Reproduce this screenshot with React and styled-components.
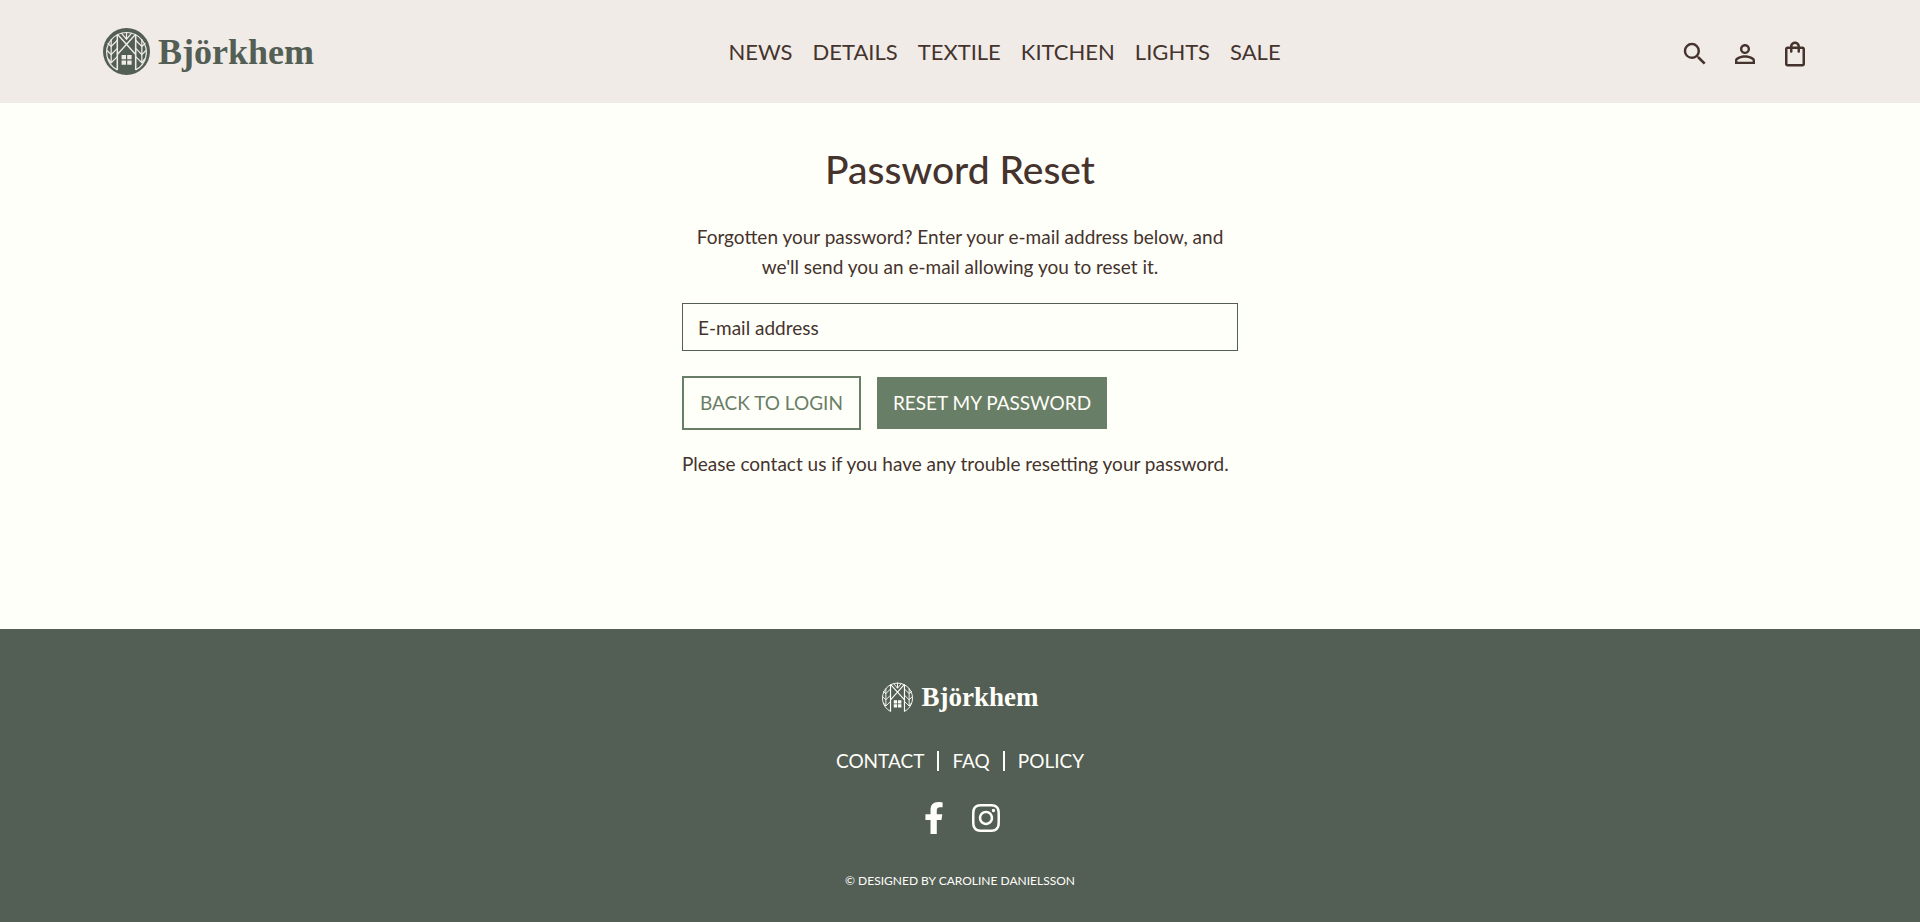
import React from "react";
import styled, { createGlobalStyle } from "styled-components";
import { FaFacebookF, FaInstagram } from "react-icons/fa";

const GlobalStyle = createGlobalStyle`
  *, *::before, *::after { box-sizing: border-box; }
  body {
    margin: 0;
    background: #fffffa;
    color: #45332d;
    font-family: Lato, "Liberation Sans", sans-serif;
    font-size: 19px;
    line-height: 30px;
  }
  a { color: inherit; text-decoration: none; }
`;

const Page = styled.div`
  display: flex;
  flex-direction: column;
  min-height: 100vh;
`;

const Header = styled.header`
  display: flex;
  align-items: center;
  justify-content: space-between;
  padding: 28px 100px;
  background: #f0ebe6;
`;

const Brand = styled.a`
  display: inline-flex;
  align-items: center;
  gap: ${(p) => (p.$small ? 9 : 8)}px;
  padding: 0 ${(p) => (p.$small ? 0 : 3)}px;
  color: ${(p) => (p.$small ? "#fffffa" : "#535e55")};
  svg {
    width: ${(p) => (p.$small ? 31 : 47)}px;
    height: ${(p) => (p.$small ? 31 : 47)}px;
  }
`;

const Wordmark = styled.span`
  font-family: "Liberation Serif", serif;
  font-weight: 700;
  font-size: ${(p) => (p.$small ? 27 : 36)}px;
  line-height: 32px;
`;

const Nav = styled.nav`
  display: flex;
  padding-left: 22px;
  font-size: 22px;
  a { padding: 0 10px; }
`;

const Tools = styled.div`
  display: flex;
  padding-top: 5px;
`;

const IconButton = styled.button`
  display: flex;
  padding: 0 10px;
  border: 0;
  background: none;
  color: inherit;
  cursor: pointer;
  svg { width: 30px; height: 30px; fill: currentColor; }
`;

const Main = styled.main`
  display: flex;
  flex: 1;
  flex-direction: column;
  align-items: center;
  padding: 36px 20px;
`;

const Panel = styled.section`
  width: 100%;
  max-width: 556px;
`;

const Title = styled.h1`
  margin: 0 0 23px;
  font-size: 39px;
  font-weight: 500;
  line-height: 60px;
  text-align: center;
`;

const Text = styled.p`
  margin: 0;
  text-align: ${(p) => (p.$center ? "center" : "left")};
`;

const Field = styled.input`
  display: block;
  width: 100%;
  height: 48px;
  margin: 21px 0 25px;
  padding: 0 15px;
  border: 1px solid #535e55;
  border-radius: 0;
  background: transparent;
  color: inherit;
  font: inherit;
  &::placeholder { color: inherit; opacity: 1; }
`;

const Actions = styled.div`
  display: flex;
  align-items: center;
  gap: 16px;
  margin-bottom: 19px;
`;

const Button = styled.button`
  height: ${(p) => (p.$solid ? 52 : 54)}px;
  padding: 0 16px;
  border: ${(p) => (p.$solid ? "0" : "2px solid #697e66")};
  background: ${(p) => (p.$solid ? "#697e66" : "transparent")};
  color: ${(p) => (p.$solid ? "#fffffa" : "#697e66")};
  font: inherit;
  cursor: pointer;
`;

const Footer = styled.footer`
  display: flex;
  flex-direction: column;
  align-items: center;
  padding: 52px 20px 26px;
  background: #535e55;
  color: #fffffa;
`;

const FooterLinks = styled.nav`
  display: flex;
  align-items: center;
  margin: 33px 0 26px;
  a { padding: 0 13px; }
`;

const Divider = styled.span`
  width: 2px;
  height: 20px;
  background: #fffffa;
`;

const Social = styled.div`
  display: flex;
  gap: 20px;
  margin-bottom: 32px;
  a { display: flex; }
`;

const Credit = styled.small`
  font-size: 12px;
`;

function Emblem({ small }) {
  const line = small ? "currentColor" : "#f0ebe6";
  return (
    <svg viewBox={small ? "3 3 40 40" : "0 0 46 46"} aria-hidden="true">
      {!small && <circle cx="23" cy="23" r="23" fill="currentColor" />}
      <g fill="none" stroke={line} strokeWidth="1.2">
        <path d="M14 41A19.4 19.4 0 1 1 32 41" />
        <path d="M14 41V6.5M32 41V6.5" strokeWidth="1.5" />
        <path d="M8 11V34M38 11V34" />
        <path d="M23 4V11M18 5L23 11L28 5" />
        <path d="M14 6L23 16L32 6M14 26L23 16L32 26" strokeWidth="1.4" />
        <path d="M14 12L8 18L4.5 15M14 20L8 26L4 22M14 28L8 34L5 30" />
        <path d="M32 12L38 18L41.5 15M32 20L38 26L42 22M32 28L38 34L41 30" />
      </g>
      <path
        fill={line}
        d="M18.2 26.4h4.3v4.3h-4.3zM23.7 26.4H28v4.3h-4.3zM18.2 31.7h4.3V36h-4.3zM23.7 31.7H28V36h-4.3z"
      />
    </svg>
  );
}

const tools = [
  ["Search", "M15.5 14h-.79l-.28-.27A6.47 6.47 0 0 0 16 9.5 6.5 6.5 0 1 0 9.5 16c1.61 0 3.09-.59 4.23-1.57l.27.28v.79l5 4.99L20.49 19l-4.99-5zm-6 0C7.01 14 5 11.99 5 9.5S7.01 5 9.5 5 14 7.01 14 9.5 11.99 14 9.5 14z"],
  ["Account", "M12 5.9a2.1 2.1 0 1 1 0 4.2 2.1 2.1 0 0 1 0-4.2m0 9c2.97 0 6.1 1.46 6.1 2.1v1.1H5.9V17c0-.64 3.13-2.1 6.1-2.1M12 4C9.79 4 8 5.79 8 8s1.79 4 4 4 4-1.79 4-4-1.79-4-4-4zm0 9c-2.67 0-8 1.34-8 4v3h16v-3c0-2.66-5.33-4-8-4z"],
  ["Shopping bag", "M18 6h-2c0-2.21-1.79-4-4-4S8 3.79 8 6H6c-1.1 0-2 .9-2 2v12c0 1.1.9 2 2 2h12c1.1 0 2-.9 2-2V8c0-1.1-.9-2-2-2zm-6-2c1.1 0 2 .9 2 2h-4c0-1.1.9-2 2-2zm6 16H6V8h2v2c0 .55.45 1 1 1s1-.45 1-1V8h4v2c0 .55.45 1 1 1s1-.45 1-1V8h2v12z"],
];

const categories = ["NEWS", "DETAILS", "TEXTILE", "KITCHEN", "LIGHTS", "SALE"];

export default function App() {
  return (
    <Page>
      <GlobalStyle />
      <Header>
        <Brand href="#home">
          <Emblem />
          <Wordmark>Björkhem</Wordmark>
        </Brand>
        <Nav aria-label="Categories">
          {categories.map((name) => (
            <a key={name} href={`#${name.toLowerCase()}`}>{name}</a>
          ))}
        </Nav>
        <Tools>
          {tools.map(([label, d]) => (
            <IconButton key={label} type="button" aria-label={label}>
              <svg viewBox="0 0 24 24" aria-hidden="true"><path d={d} /></svg>
            </IconButton>
          ))}
        </Tools>
      </Header>
      <Main>
        <Panel>
          <Title>Password Reset</Title>
          <Text $center>
            Forgotten your password? Enter your e-mail address below, and we'll
            send you an e-mail allowing you to reset it.
          </Text>
          <form onSubmit={(e) => e.preventDefault()}>
            <Field type="email" placeholder="E-mail address" aria-label="E-mail address" />
            <Actions>
              <Button type="button">BACK TO LOGIN</Button>
              <Button type="submit" $solid>RESET MY PASSWORD</Button>
            </Actions>
          </form>
          <Text>Please contact us if you have any trouble resetting your password.</Text>
        </Panel>
      </Main>
      <Footer>
        <Brand href="#home" $small>
          <Emblem small />
          <Wordmark $small>Björkhem</Wordmark>
        </Brand>
        <FooterLinks aria-label="Information">
          <a href="#contact">CONTACT</a>
          <Divider />
          <a href="#faq">FAQ</a>
          <Divider />
          <a href="#policy">POLICY</a>
        </FooterLinks>
        <Social>
          <a href="#facebook" aria-label="Facebook"><FaFacebookF size={32} /></a>
          <a href="#instagram" aria-label="Instagram"><FaInstagram size={32} /></a>
        </Social>
        <Credit>© DESIGNED BY CAROLINE DANIELSSON</Credit>
      </Footer>
    </Page>
  );
}
